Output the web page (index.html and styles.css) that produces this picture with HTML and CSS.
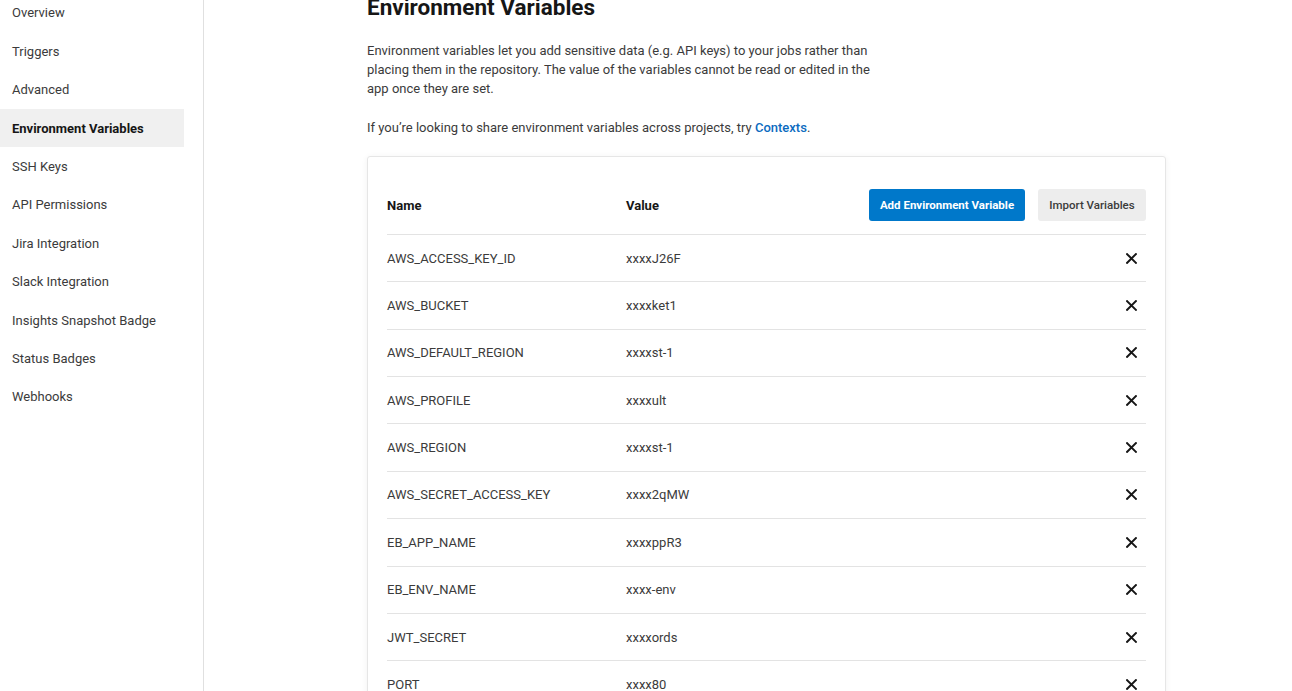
FILE: index.html
```html
<!DOCTYPE html>
<html lang="en">
<head>
<meta charset="utf-8">
<title>Environment Variables</title>
<link rel="stylesheet" href="styles.css">
</head>
<body>
<div class="layout">
  <nav class="sidebar">
    <ul class="nav-list">
      <li class="nav-item">Overview</li>
      <li class="nav-item">Triggers</li>
      <li class="nav-item">Advanced</li>
      <li class="nav-item active">Environment Variables</li>
      <li class="nav-item">SSH Keys</li>
      <li class="nav-item">API Permissions</li>
      <li class="nav-item">Jira Integration</li>
      <li class="nav-item">Slack Integration</li>
      <li class="nav-item">Insights Snapshot Badge</li>
      <li class="nav-item">Status Badges</li>
      <li class="nav-item">Webhooks</li>
    </ul>
  </nav>
  <main class="main">
    <h1 class="title">Environment Variables</h1>
    <p class="intro">Environment variables let you add sensitive data (e.g. API keys) to your jobs rather than placing them in the repository. The value of the variables cannot be read or edited in the app once they are set.</p>
    <p class="intro">If you’re looking to share environment variables across projects, try <a class="link" href="#">Contexts</a>.</p>
    <section class="card">
      <div class="row head">
        <div class="col-name">Name</div>
        <div class="col-value">Value</div>
        <div class="actions">
          <button class="btn primary">Add Environment Variable</button>
          <button class="btn secondary">Import Variables</button>
        </div>
      </div>
      <div class="row"><div class="col-name">AWS_ACCESS_KEY_ID</div><div class="col-value">xxxxJ26F</div><span class="del"><svg viewBox="0 0 10 10" width="11" height="11"><path d="M1 1L9 9M9 1L1 9" stroke="#161616" stroke-width="1.8" stroke-linecap="square"/></svg></span></div>
      <div class="row"><div class="col-name">AWS_BUCKET</div><div class="col-value">xxxxket1</div><span class="del"><svg viewBox="0 0 10 10" width="11" height="11"><path d="M1 1L9 9M9 1L1 9" stroke="#161616" stroke-width="1.8" stroke-linecap="square"/></svg></span></div>
      <div class="row"><div class="col-name">AWS_DEFAULT_REGION</div><div class="col-value">xxxxst-1</div><span class="del"><svg viewBox="0 0 10 10" width="11" height="11"><path d="M1 1L9 9M9 1L1 9" stroke="#161616" stroke-width="1.8" stroke-linecap="square"/></svg></span></div>
      <div class="row"><div class="col-name">AWS_PROFILE</div><div class="col-value">xxxxult</div><span class="del"><svg viewBox="0 0 10 10" width="11" height="11"><path d="M1 1L9 9M9 1L1 9" stroke="#161616" stroke-width="1.8" stroke-linecap="square"/></svg></span></div>
      <div class="row"><div class="col-name">AWS_REGION</div><div class="col-value">xxxxst-1</div><span class="del"><svg viewBox="0 0 10 10" width="11" height="11"><path d="M1 1L9 9M9 1L1 9" stroke="#161616" stroke-width="1.8" stroke-linecap="square"/></svg></span></div>
      <div class="row"><div class="col-name">AWS_SECRET_ACCESS_KEY</div><div class="col-value">xxxx2qMW</div><span class="del"><svg viewBox="0 0 10 10" width="11" height="11"><path d="M1 1L9 9M9 1L1 9" stroke="#161616" stroke-width="1.8" stroke-linecap="square"/></svg></span></div>
      <div class="row"><div class="col-name">EB_APP_NAME</div><div class="col-value">xxxxppR3</div><span class="del"><svg viewBox="0 0 10 10" width="11" height="11"><path d="M1 1L9 9M9 1L1 9" stroke="#161616" stroke-width="1.8" stroke-linecap="square"/></svg></span></div>
      <div class="row"><div class="col-name">EB_ENV_NAME</div><div class="col-value">xxxx-env</div><span class="del"><svg viewBox="0 0 10 10" width="11" height="11"><path d="M1 1L9 9M9 1L1 9" stroke="#161616" stroke-width="1.8" stroke-linecap="square"/></svg></span></div>
      <div class="row"><div class="col-name">JWT_SECRET</div><div class="col-value">xxxxords</div><span class="del"><svg viewBox="0 0 10 10" width="11" height="11"><path d="M1 1L9 9M9 1L1 9" stroke="#161616" stroke-width="1.8" stroke-linecap="square"/></svg></span></div>
      <div class="row"><div class="col-name">PORT</div><div class="col-value">xxxx80</div><span class="del"><svg viewBox="0 0 10 10" width="11" height="11"><path d="M1 1L9 9M9 1L1 9" stroke="#161616" stroke-width="1.8" stroke-linecap="square"/></svg></span></div>
    </section>
  </main>
</div>
</body>
</html>
```
FILE: styles.css
```css
* { box-sizing: border-box; }
html, body {
  margin: 0;
  padding: 0;
  background: #fff;
  overflow: hidden;
}
body {
  font-family: Roboto, "Liberation Sans", Arial, sans-serif;
  font-size: 13px;
  color: #3b3b3b;
}
.layout {
  display: flex;
  min-height: 691px;
}
.sidebar {
  width: 204px;
  flex: none;
  border-right: 1px solid #e0e0e0;
}
.nav-list {
  list-style: none;
  margin: -6.3px 0 0;
  padding: 0;
  width: 184px;
}
.nav-item {
  height: 38.4px;
  display: flex;
  align-items: center;
  padding-left: 12px;
  color: #3b3b3b;
}
.nav-item.active {
  background: #f0f0f0;
  font-weight: 700;
  color: #161616;
}
.main {
  flex: 1;
  padding-left: 163px;
  margin-top: -6px;
}
.title {
  margin: 0;
  font-size: 22.5px;
  line-height: 26px;
  font-weight: 700;
  color: #161616;
}
.intro {
  margin: 20.5px 0 0;
  width: 518px;
  line-height: 19.2px;
  color: #3b3b3b;
}
.intro + .intro { margin-top: 19.5px; }
.link {
  color: #0b6bbf;
  font-weight: 500;
  text-decoration: none;
}
.card {
  margin-top: 19.5px;
  width: 799px;
  border: 1px solid #e6e6e6;
  border-radius: 3px;
  box-shadow: 0 1px 6px rgba(0, 0, 0, 0.06);
  padding: 20px 19px 0;
}
.row {
  display: flex;
  align-items: center;
  height: 47.4px;
  border-bottom: 1px solid #e3e3e3;
  color: #3b3b3b;
}
.row.head {
  height: 57.5px;
  padding-bottom: 1px;
  font-weight: 700;
  color: #161616;
}
.col-name { width: 239px; flex: none; }
.col-value { flex: 1; }
.actions {
  display: flex;
  gap: 13px;
}
.btn {
  height: 32px;
  border: none;
  border-radius: 3px;
  font-family: Roboto, "Liberation Sans", Arial, sans-serif;
  font-size: 11.5px;
  padding: 0;
  white-space: nowrap;
  cursor: pointer;
}
.btn.primary {
  background: #0078ca;
  color: #fff;
  font-weight: 700;
  width: 156px;
}
.btn.secondary {
  background: #ededed;
  color: #3b3b3b;
  font-weight: 500;
  width: 108px;
}
.del {
  display: flex;
  margin-right: 9px;
}
```
